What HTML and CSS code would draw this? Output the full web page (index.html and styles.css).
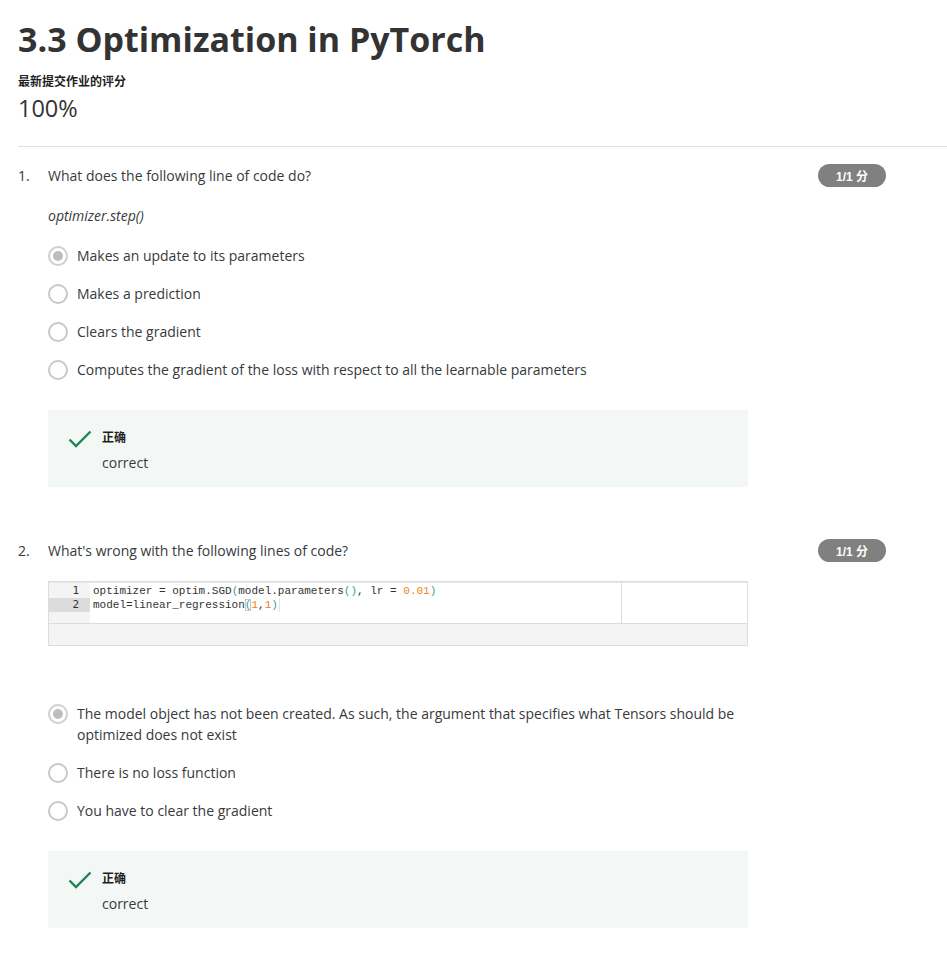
FILE: index.html
```html
<!DOCTYPE html>
<html>
<head>
<meta charset="utf-8">
<link rel="stylesheet" href="styles.css">
</head>
<body>
<div class="page">
  <header class="head">
    <h1 class="title">3.3 Optimization in PyTorch</h1>
    <div class="grade-label">最新提交作业的评分</div>
    <div class="grade">100%</div>
  </header>

  <section class="question q1">
    <div class="q-row">
      <span class="q-num">1.</span>
      <div class="q-body">
        <div class="q-text">What does the following line of code do?</div>
        <div class="q-code"><em>optimizer.step()</em></div>
        <div class="options">
          <div class="opt"><span class="radio checked"></span><span class="opt-text">Makes an update to its parameters</span></div>
          <div class="opt"><span class="radio"></span><span class="opt-text">Makes a prediction</span></div>
          <div class="opt"><span class="radio"></span><span class="opt-text">Clears the gradient</span></div>
          <div class="opt"><span class="radio"></span><span class="opt-text">Computes the gradient of the loss with respect to all the learnable parameters</span></div>
        </div>
        <div class="feedback">
          <svg class="check" width="24" height="18" viewBox="0 0 24 18"><path d="M1.5 9.5 L8 16 L22.5 1.5" fill="none" stroke="#1f8354" stroke-width="2.4"/></svg>
          <div class="fb-text">
            <div class="fb-title">正确</div>
            <div class="fb-body">correct</div>
          </div>
        </div>
      </div>
      <span class="badge">1/1 分</span>
    </div>
  </section>

  <section class="question q2">
    <div class="q-row">
      <span class="q-num">2.</span>
      <div class="q-body">
        <div class="q-text">What's wrong with the following lines of code?</div>
        <div class="codebox">
          <div class="editor">
            <div class="gutter">
              <div class="ln">1</div>
              <div class="ln active">2</div>
            </div>
            <div class="code">
              <div class="cl">optimizer = optim.SGD<span class="p">(</span>model.parameters<span class="p">()</span>, lr = <span class="n">0.01</span><span class="p">)</span></div>
              <div class="cl">model=linear_regression<span class="p match">(</span><span class="n">1</span>,<span class="n">1</span><span class="p">)</span><span class="cursor"></span></div>
            </div>
            <div class="out"></div>
          </div>
          <div class="codefoot"></div>
        </div>
        <div class="options opts2">
          <div class="opt"><span class="radio checked"></span><span class="opt-text">The model object has not been created. As such, the argument that specifies what Tensors should be optimized does not exist</span></div>
          <div class="opt"><span class="radio"></span><span class="opt-text">There is no loss function</span></div>
          <div class="opt"><span class="radio"></span><span class="opt-text">You have to clear the gradient</span></div>
        </div>
        <div class="feedback">
          <svg class="check" width="24" height="18" viewBox="0 0 24 18"><path d="M1.5 9.5 L8 16 L22.5 1.5" fill="none" stroke="#1f8354" stroke-width="2.4"/></svg>
          <div class="fb-text">
            <div class="fb-title">正确</div>
            <div class="fb-body">correct</div>
          </div>
        </div>
      </div>
      <span class="badge">1/1 分</span>
    </div>
  </section>
</div>
</body>
</html>
```

FILE: styles.css
```css
* { box-sizing: border-box; }
html, body { margin: 0; padding: 0; background: #fff; }
body {
  font-family: "Open Sans", "Noto Sans CJK SC", sans-serif;
  color: #373a3c;
  font-size: 14px;
}
.page { padding-left: 18px; }
.head {
  padding-top: 14px;
  padding-bottom: 23px;
  border-bottom: 1px solid #e0e0e0;
}
.title {
  margin: 0;
  font-size: 34px;
  font-weight: 700;
  line-height: 50px;
  color: #333;
}
.grade-label {
  margin-top: 10px;
  font-size: 12px;
  font-weight: 700;
  line-height: 16px;
  color: #1f1f1f;
}
.grade {
  margin-top: 3px;
  font-size: 23.5px;
  line-height: 30px;
  font-weight: 400;
  color: #333;
}
.question { padding-top: 18px; }
.q2 { padding-top: 53px; }
.q-row { display: flex; align-items: flex-start; }
.q-num { width: 30px; line-height: 22px; color: #373a3c; }
.q-body { width: 700px; }
.q-text { line-height: 22px; }
.q-code { margin-top: 18px; line-height: 22px; color: #373a3c; }
.options { margin-top: 18px; display: flex; flex-direction: column; gap: 17px; }
.opt { display: flex; align-items: flex-start; }
.radio {
  flex: none;
  width: 20px; height: 20px;
  border: 2px solid #c8c8c8;
  border-radius: 50%;
  margin-top: 1px;
  margin-right: 9px;
  display: flex; align-items: center; justify-content: center;
}
.radio.checked { border-color: #cfcfcf; }
.radio.checked::after {
  content: "";
  width: 10px; height: 10px;
  border-radius: 50%;
  background: #bdbdbd;
}
.opt-text { line-height: 21px; }
.feedback {
  margin-top: 30px;
  height: 77px;
  background: #f3f8f6;
  display: flex;
  align-items: flex-start;
  padding: 19px 0 0 20px;
}
.check { margin-right: 10px; margin-top: 1px; }
.fb-title { font-size: 12px; font-weight: 700; line-height: 20px; color: #1f1f1f; margin-top: -1px; }
.fb-body { line-height: 22px; margin-top: 4px; }
.badge {
  margin-left: 70px;
  margin-top: -1px;
  width: 68px; height: 23px;
  border-radius: 12px;
  background: #808080;
  color: #fff;
  font-family: "Liberation Sans", "Noto Sans CJK SC", sans-serif;
  font-weight: 700;
  font-size: 12px;
  display: flex; align-items: center; justify-content: center;
}
.codebox {
  margin-top: 19px;
  border: 1px solid #dcdcdc;
  background: #f4f4f4;
}
.editor {
  display: flex;
  background: #fff;
  border-bottom: 1px solid #dcdcdc;
  height: 42px;
  border-top: 1px solid #e8e8e8;
}
.gutter { width: 41px; background: #f4f4f4; padding-top: 1px; }
.ln {
  font-family: "DejaVu Sans Mono", monospace;
  font-size: 11px; line-height: 14px;
  text-align: right; padding-right: 11px;
  color: #333;
}
.ln.active { background: #dcdcdc; }
.code { flex: 1; padding-top: 1px; padding-left: 3px; }
.cl {
  font-family: "Liberation Mono", monospace;
  font-size: 11px; line-height: 14px;
  color: #333;
  white-space: pre;
}
.p { color: #3a9c9e; }
.n { color: #f07f12; }
.match { outline: 1px solid #c8c8c8; outline-offset: -1px; }
.cursor { display: inline-block; width: 1px; height: 13px; background: #dde3e8; vertical-align: middle; margin-left: 1px; }
.out { width: 126px; border-left: 1px solid #d6dde3; }
.codefoot { height: 21px; }
.opts2 { margin-top: 57px; }
```
